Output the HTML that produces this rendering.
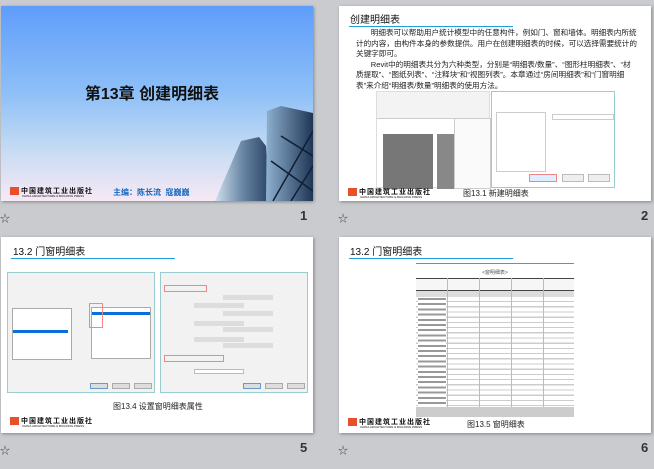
<!DOCTYPE html>
<html><head><meta charset="utf-8"><style>
*{margin:0;padding:0;box-sizing:border-box}
body{width:654px;height:469px;background:#c9cbce;position:relative;overflow:hidden;font-family:"Liberation Sans","Noto Sans CJK SC",sans-serif}
.s{position:absolute;width:312px;height:195px;background:#fff;box-shadow:1px 1px 3px rgba(0,0,0,.35);overflow:hidden}
.n{position:absolute;font-size:13px;color:#333;font-weight:bold}
.star{position:absolute;font-size:10px;color:#444}
.t{position:absolute;font-size:10px;color:#111}
.ul{position:absolute;height:1px;background:#1aa0e0}
.logo{position:absolute;font-size:7px;color:#111;font-weight:bold;letter-spacing:1px;white-space:nowrap}
.logo i{display:inline-block;width:9px;height:8px;background:#e8502a;vertical-align:middle;margin-right:2px}
.logo small{display:block;font-size:3px;letter-spacing:0;font-weight:normal;margin-left:12px;margin-top:-2px}
.p{position:absolute;font-size:7.6px;line-height:10.6px;color:#222}
.dlg{position:absolute;background:#f2f2f2;border:1px solid #9cc;}
</style></head><body>

<!-- slide 1 -->
<div class="s" style="left:1px;top:6px;background:linear-gradient(#5f9dfb,#8ec0f7 45%,#c9dcf3 75%,#f7e9f5)">
  <div style="position:absolute;left:0;width:312px;top:74px;text-align:center;font-size:16px;font-weight:bold;color:#111;padding-right:10px">第13章 创建明细表</div>
  <svg style="position:absolute;left:210px;top:95px" width="102" height="100">
    <defs><linearGradient id="g1" x1="0" x2="1"><stop offset="0" stop-color="#cfe0ef"/><stop offset=".5" stop-color="#6b88a6"/><stop offset="1" stop-color="#2b4566"/></linearGradient>
    <linearGradient id="g2" x1="0" x2="1"><stop offset="0" stop-color="#8fb0cf"/><stop offset="1" stop-color="#1f3656"/></linearGradient></defs>
    <polygon points="4,100 30,40 48,36 55,45 58,100" fill="url(#g1)"/>
    <polygon points="55,100 56,10 70,5 102,12 102,100" fill="url(#g2)"/>
    <g stroke="#0f1e33" stroke-width="1.5"><line x1="62" y1="100" x2="102" y2="30"/><line x1="80" y1="100" x2="102" y2="65"/><line x1="60" y1="60" x2="102" y2="90"/><line x1="70" y1="35" x2="102" y2="55"/></g>
  </svg>
  <div class="logo" style="left:9px;top:180px"><i></i>中国建筑工业出版社<small>CHINA ARCHITECTURE &amp; BUILDING PRESS</small></div>
  <div style="position:absolute;left:112px;top:181px;font-size:8px;color:#1566c0;font-weight:bold">主编：陈长流&nbsp;&nbsp;寇巍巍</div>
</div>
<div class="star" style="left:0;top:210px">☆</div>
<div class="n" style="left:300px;top:208px">1</div>

<!-- slide 2 -->
<div class="s" style="left:339px;top:6px">
  <div class="t" style="left:11px;top:5px">创建明细表</div>
  <div class="ul" style="left:10px;top:20px;width:164px"></div>
  <div class="p" style="left:17px;top:22px;width:282px">&nbsp;&nbsp;&nbsp;&nbsp;&nbsp;&nbsp;&nbsp;明细表可以帮助用户统计模型中的任意构件，例如门、窗和墙体。明细表内所统计的内容，由构件本身的参数提供。用户在创建明细表的时候，可以选择需要统计的关键字即可。<br>&nbsp;&nbsp;&nbsp;&nbsp;&nbsp;&nbsp;&nbsp;Revit中的明细表共分为六种类型，分别是“明细表/数量”、“图形柱明细表”、“材质提取”、“图纸列表”、“注释块”和“视图列表”。本章通过“房间明细表”和“门窗明细表”来介绍“明细表/数量”明细表的使用方法。</div>
  <div style="position:absolute;left:37px;top:85px;width:114px;height:97px;background:#fff;border:1px solid #ddd">
    <div style="height:27px;background:#f3f3f3;border-bottom:1px solid #ccc"></div>
    <div style="position:absolute;left:6px;top:42px;width:50px;height:55px;background:#777"></div>
    <div style="position:absolute;left:60px;top:42px;width:20px;height:55px;background:#888"></div>
    <div style="position:absolute;left:77px;top:26px;width:37px;height:71px;background:#fafafa;border:1px solid #ccc"></div>
  </div>
  <div class="dlg" style="left:152px;top:85px;width:124px;height:97px;background:#fff">
    <div style="position:absolute;left:4px;top:20px;width:50px;height:60px;border:1px solid #ccc"></div>
    <div style="position:absolute;left:60px;top:22px;width:62px;height:6px;border:1px solid #ccc"></div>
    <div style="position:absolute;left:37px;top:82px;width:28px;height:8px;background:#ddeeff;border:1px solid #e88"></div>
    <div style="position:absolute;left:70px;top:82px;width:22px;height:8px;background:#eee;border:1px solid #bbb"></div>
    <div style="position:absolute;left:96px;top:82px;width:22px;height:8px;background:#eee;border:1px solid #bbb"></div>
  </div>
  <div class="logo" style="left:9px;top:181px"><i></i>中国建筑工业出版社<small>CHINA ARCHITECTURE &amp; BUILDING PRESS</small></div>
  <div style="position:absolute;left:124px;top:182px;font-size:8px;color:#222">图13.1 新建明细表</div>
</div>
<div class="star" style="left:338px;top:210px">☆</div>
<div class="n" style="left:641px;top:208px">2</div>

<!-- slide 5 -->
<div class="s" style="left:1px;top:237px;height:196px">
  <div class="t" style="left:12px;top:6px">13.2 门窗明细表</div>
  <div class="ul" style="left:10px;top:21px;width:164px"></div>
  <div class="dlg" style="left:6px;top:35px;width:148px;height:121px">
    <div style="position:absolute;left:4px;top:35px;width:60px;height:52px;background:#fff;border:1px solid #aaa"></div>
    <div style="position:absolute;left:5px;top:57px;width:55px;height:3px;background:#0a6fd8"></div>
    <div style="position:absolute;left:83px;top:34px;width:60px;height:52px;background:#fff;border:1px solid #aaa"></div>
    <div style="position:absolute;left:84px;top:39px;width:58px;height:3px;background:#0a6fd8"></div>
    <div style="position:absolute;left:81px;top:30px;width:14px;height:25px;border:1px solid #e88"></div>
    <div style="position:absolute;left:82px;top:110px;width:18px;height:6px;background:#ddd;border:1px solid #69c"></div>
    <div style="position:absolute;left:104px;top:110px;width:18px;height:6px;background:#ddd;border:1px solid #aaa"></div>
    <div style="position:absolute;left:126px;top:110px;width:18px;height:6px;background:#ddd;border:1px solid #aaa"></div>
  </div>
  <div class="dlg" style="left:159px;top:35px;width:148px;height:121px">
    <div style="position:absolute;left:3px;top:12px;width:43px;height:7px;border:1px solid #e88"></div>
    <div style="position:absolute;left:33px;top:30px;width:50px;height:5px;background:#ddd"></div>
    <div style="position:absolute;left:62px;top:22px;width:50px;height:5px;background:#ddd"></div>
    <div style="position:absolute;left:62px;top:38px;width:50px;height:5px;background:#ddd"></div>
    <div style="position:absolute;left:33px;top:48px;width:50px;height:5px;background:#ddd"></div>
    <div style="position:absolute;left:62px;top:54px;width:50px;height:5px;background:#ddd"></div>
    <div style="position:absolute;left:33px;top:64px;width:50px;height:5px;background:#ddd"></div>
    <div style="position:absolute;left:62px;top:70px;width:50px;height:5px;background:#ddd"></div>
    <div style="position:absolute;left:3px;top:82px;width:60px;height:7px;border:1px solid #e88"></div>
    <div style="position:absolute;left:33px;top:96px;width:50px;height:5px;background:#fff;border:1px solid #bbb"></div>
    <div style="position:absolute;left:82px;top:110px;width:18px;height:6px;background:#ddd;border:1px solid #69c"></div>
    <div style="position:absolute;left:104px;top:110px;width:18px;height:6px;background:#ddd;border:1px solid #aaa"></div>
    <div style="position:absolute;left:126px;top:110px;width:18px;height:6px;background:#ddd;border:1px solid #aaa"></div>
  </div>
  <div style="position:absolute;left:112px;top:164px;font-size:8px;color:#222">图13.4 设置窗明细表属性</div>
  <div class="logo" style="left:9px;top:179px"><i></i>中国建筑工业出版社<small>CHINA ARCHITECTURE &amp; BUILDING PRESS</small></div>
</div>
<div class="star" style="left:0;top:442px">☆</div>
<div class="n" style="left:300px;top:440px">5</div>

<!-- slide 6 -->
<div class="s" style="left:339px;top:237px;height:196px">
  <div class="t" style="left:11px;top:6px">13.2 门窗明细表</div>
  <div class="ul" style="left:10px;top:21px;width:164px"></div>
  <div style="position:absolute;left:77px;top:26px;width:158px;height:154px;background:#fff;border-top:1px solid #888">
    <div style="text-align:center;font-size:5px;color:#555;margin-top:5px">&lt;窗明细表&gt;</div>
    <div style="position:absolute;top:14px;left:0;right:0;height:13px;border-top:1px solid #444;border-bottom:1px solid #444;background:#f6f6f6"></div>
    <div style="position:absolute;top:27px;left:0;right:0;height:6px;background:#ddd"></div>
    <div style="position:absolute;top:33px;left:0;right:0;height:111px;background:repeating-linear-gradient(#fff 0 4px,#ccc 4px 5.2px)"></div>
    <div style="position:absolute;top:14px;bottom:10px;left:31px;width:1px;background:#bbb"></div>
    <div style="position:absolute;top:14px;bottom:10px;left:63px;width:1px;background:#bbb"></div>
    <div style="position:absolute;top:14px;bottom:10px;left:95px;width:1px;background:#bbb"></div>
    <div style="position:absolute;top:14px;bottom:10px;left:127px;width:1px;background:#bbb"></div>
    <div style="position:absolute;top:33px;left:2px;width:28px;height:111px;background:repeating-linear-gradient(#fff 0 1px,#999 1px 3px,#fff 3px 5.2px)"></div>
    <div style="position:absolute;bottom:0;left:0;right:0;height:10px;background:#ccc"></div>
  </div>
  <div class="logo" style="left:9px;top:180px"><i></i>中国建筑工业出版社<small>CHINA ARCHITECTURE &amp; BUILDING PRESS</small></div>
  <div style="position:absolute;left:128px;top:182px;font-size:8px;color:#222">图13.5 窗明细表</div>
</div>
<div class="star" style="left:338px;top:442px">☆</div>
<div class="n" style="left:641px;top:440px">6</div>
</body></html>
